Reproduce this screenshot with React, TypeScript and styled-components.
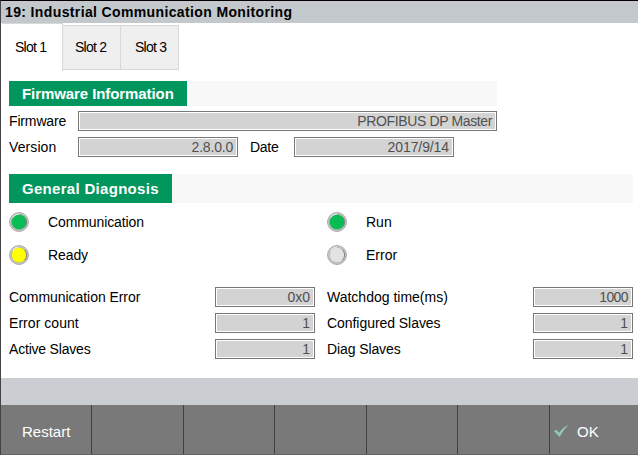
import React from "react";
import styled, { createGlobalStyle } from "styled-components";

const GlobalStyle = createGlobalStyle`
  * { box-sizing: border-box; }
  html, body { margin: 0; padding: 0; background: #fff; overflow: hidden; }
`;

const Screen = styled.div`
  width: 638px;
  height: 455px;
  display: flex;
  flex-direction: column;
  background: #fff;
  border-top: 1px solid #000;
  border-left: 1px solid #444448;
  font-family: "Liberation Sans", Arial, sans-serif;
  font-size: 14px;
  color: #000;
  white-space: nowrap;
`;

const TitleBar = styled.header`
  height: 22px;
  flex: none;
  padding-left: 4px;
  background: #c3c8cc;
  border-top: 2px solid #c8c7cd;
  font-size: 14px;
  line-height: 19px;
  font-weight: bold;
  letter-spacing: 0.37px;
`;

const TabList = styled.nav`
  display: flex;
  align-items: flex-start;
  height: 48px;
  flex: none;
  padding-left: 1px;
`;

const Tab = styled.button<{ $active?: boolean; $indent: number }>`
  width: ${(p) => (p.$active ? 61 : 58)}px;
  height: ${(p) => (p.$active ? 48 : 45)}px;
  margin: ${(p) => (p.$active ? 0 : "2px 0 0")};
  padding: 0 0 ${(p) => (p.$active ? 2 : 1)}px ${(p) => p.$indent}px;
  border: 0 solid #d8d8d8;
  border-width: 1px 1px 0 0;
  border-bottom-width: ${(p) => (p.$active ? 0 : 1)}px;
  background: ${(p) => (p.$active ? "#fff" : "#efefef")};
  color: #000;
  font: inherit;
  text-align: left;
  letter-spacing: -0.75px;
`;

const Section = styled.section<{ $top: number }>`
  margin: ${(p) => p.$top}px 0 0 8px;
`;

const SectionStrip = styled.div<{ $width: number; $height: number }>`
  display: flex;
  width: ${(p) => p.$width}px;
  height: ${(p) => p.$height}px;
  background: #f8f8f8;
`;

const SectionTitle = styled.h2<{ $width: number; $spacing: number }>`
  display: flex;
  align-items: center;
  width: ${(p) => p.$width}px;
  margin: 0;
  padding-left: 13px;
  background: #00965e;
  color: #fff;
  font-size: 15px;
  font-weight: bold;
  letter-spacing: ${(p) => p.$spacing}px;
`;

const FieldRow = styled.div<{ $gap: number }>`
  display: flex;
  align-items: center;
  height: 20px;
  margin-top: ${(p) => p.$gap}px;
`;

const Label = styled.label<{ $width: number; $spacing?: number }>`
  width: ${(p) => p.$width}px;
  flex: none;
  letter-spacing: ${(p) => p.$spacing ?? 0}px;
`;

const Value = styled.output<{ $width: number; $spacing?: number }>`
  display: block;
  flex: none;
  width: ${(p) => p.$width}px;
  height: 20px;
  padding-right: 4px;
  border: 1px solid #777;
  box-shadow: inset 0 0 0 1px #fff;
  background: #d3d3d3;
  color: #505050;
  line-height: 19px;
  text-align: right;
  letter-spacing: ${(p) => p.$spacing ?? 0}px;
`;

const Gap = styled.span`
  width: 12px;
`;

const LampGrid = styled.div`
  display: grid;
  grid-template-columns: 318px 1fr;
  grid-auto-rows: 20px;
  row-gap: 13px;
  margin-top: 9px;
`;

const LampItem = styled.div`
  display: flex;
  align-items: center;
  gap: 19px;
`;

const CounterGrid = styled.div`
  display: grid;
  grid-template-columns: 306px 306px;
  column-gap: 12px;
  margin-top: 16px;
`;

const StatusBand = styled.div`
  height: 27px;
  margin-top: auto;
  flex: none;
  background: #cacdd2;
`;

const ButtonBar = styled.footer`
  display: grid;
  grid-template-columns: 91px 92px 91px 92px 91px 92px 88px;
  height: 50px;
  flex: none;
  background: #797979;
  border-bottom: 1px solid #6c6262;
`;

const BarButton = styled.button`
  display: flex;
  align-items: center;
  border: 0;
  border-right: 1px solid #404040;
  background: transparent;
  padding: 4px 0 0 21px;
  color: #fff;
  font: 15px "Liberation Sans", Arial, sans-serif;
  &:last-child {
    border-right: 0;
    padding-left: 4px;
    gap: 8px;
  }
`;

const Lamp = ({ color }: { color: string }) => (
  <svg width="20" height="20" viewBox="0 0 20 20">
    <circle cx="10" cy="10" r="9.4" fill="#d0d0d0" stroke="#a2a2a2" />
    <circle cx="10" cy="10" r="7.7" fill={color} stroke="#a8a8a8" strokeWidth=".7" />
    <path d="M15.4 4.6A7.6 7.6 0 0 1 15.4 15.4" fill="none" stroke="#777" strokeWidth=".8" />
    <path d="M3.4 6A7.8 7.8 0 0 1 10 1.9" fill="none" stroke="#f2f2f2" strokeWidth=".9" />
  </svg>
);

const Check = () => (
  <svg width="15" height="13" viewBox="0 0 15 13">
    <path d="M0 6.2L2.3 4.7L5.2 7.7C8 4 10.5 1.3 14.5 0C11 3.2 8.3 7.2 5.7 12Z" fill="#91c9b7" />
  </svg>
);

const lamps = [
  { label: "Communication", color: "#08bd55", spacing: -0.1 },
  { label: "Run", color: "#08bd55", spacing: 0 },
  { label: "Ready", color: "#ffff00", spacing: -0.1 },
  { label: "Error", color: "#e3e3e3", spacing: 0 },
];

const counters = [
  { label: "Communication Error", value: "0x0", spacing: -0.05, valueSpacing: 0 },
  { label: "Watchdog time(ms)", value: "1000", spacing: 0, valueSpacing: -0.6 },
  { label: "Error count", value: "1", spacing: 0.05, valueSpacing: 0 },
  { label: "Configured Slaves", value: "1", spacing: -0.05, valueSpacing: 0 },
  { label: "Active Slaves", value: "1", spacing: -0.2, valueSpacing: 0 },
  { label: "Diag Slaves", value: "1", spacing: -0.1, valueSpacing: 0 },
];

export default function App() {
  return (
    <>
      <GlobalStyle />
      <Screen>
        <TitleBar>19: Industrial Communication Monitoring</TitleBar>
        <TabList>
          <Tab $active $indent={13}>Slot 1</Tab>
          <Tab $indent={12}>Slot 2</Tab>
          <Tab $indent={14}>Slot 3</Tab>
        </TabList>
        <Section $top={10}>
          <SectionStrip $width={488} $height={25}>
            <SectionTitle $width={178} $spacing={-0.08}>Firmware Information</SectionTitle>
          </SectionStrip>
          <FieldRow $gap={5}>
            <Label $width={69} $spacing={-0.15}>Firmware</Label>
            <Value $width={419} $spacing={-0.37}>PROFIBUS DP Master</Value>
          </FieldRow>
          <FieldRow $gap={6}>
            <Label $width={69} $spacing={0.1}>Version</Label>
            <Value $width={160} $spacing={-0.2}>2.8.0.0</Value>
            <Gap />
            <Label $width={44} $spacing={-0.3}>Date</Label>
            <Value $width={160} $spacing={-0.1}>2017/9/14</Value>
          </FieldRow>
        </Section>
        <Section $top={17}>
          <SectionStrip $width={624} $height={29}>
            <SectionTitle $width={163} $spacing={0.3}>General Diagnosis</SectionTitle>
          </SectionStrip>
          <LampGrid>
            {lamps.map((l) => (
              <LampItem key={l.label}>
                <Lamp color={l.color} />
                <Label $width={110} $spacing={l.spacing}>{l.label}</Label>
              </LampItem>
            ))}
          </LampGrid>
          <CounterGrid>
            {counters.map((c) => (
              <FieldRow $gap={6} key={c.label}>
                <Label $width={206} $spacing={c.spacing}>{c.label}</Label>
                <Value $width={100} $spacing={c.valueSpacing}>{c.value}</Value>
              </FieldRow>
            ))}
          </CounterGrid>
        </Section>
        <StatusBand />
        <ButtonBar>
          <BarButton>Restart</BarButton>
          <BarButton />
          <BarButton />
          <BarButton />
          <BarButton />
          <BarButton />
          <BarButton>
            <Check />
            OK
          </BarButton>
        </ButtonBar>
      </Screen>
    </>
  );
}
